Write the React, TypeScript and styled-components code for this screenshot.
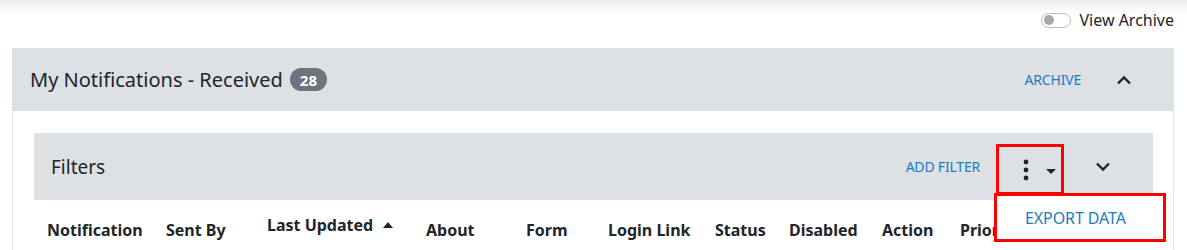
import React from "react";
import styled, { createGlobalStyle } from "styled-components";

const GlobalStyle = createGlobalStyle`
  body {
    margin: 0;
    font-family: "Noto Sans", "Open Sans", sans-serif;
    color: #212529;
    background: #fff;
  }
`;

const columns = [
  { label: "Notification", width: 119 },
  { label: "Sent By", width: 101 },
  { label: "Last Updated", width: 159, sorted: true },
  { label: "About", width: 100 },
  { label: "Form", width: 82 },
  { label: "Login Link", width: 107 },
  { label: "Status", width: 74 },
  { label: "Disabled", width: 93 },
  { label: "Action", width: 78 },
  { label: "Priority", width: 100 },
];

const App = () => {
  return (
    <>
      <GlobalStyle />
      <Page>
        <ToggleRow>
          <Switch />
          <span>View Archive</span>
        </ToggleRow>
        <Panel>
          <PanelHeader>
            <Title>
              My Notifications - Received <Badge>28</Badge>
            </Title>
            <LinkButton>ARCHIVE</LinkButton>
            <ChevronButton $gap={35}>
              <svg width="16" height="10" viewBox="0 0 16 10">
                <path d="M2 8.5 L8 2.5 L14 8.5" fill="none" stroke="#212529" strokeWidth="2.4" />
              </svg>
            </ChevronButton>
          </PanelHeader>
          <PanelBody>
            <FiltersBar>
              <FiltersTitle>Filters</FiltersTitle>
              <LinkButton>ADD FILTER</LinkButton>
              <MenuWrap>
                <KebabButton>
                  <svg width="8" height="22" viewBox="0 0 8 22">
                    <circle cx="4" cy="3" r="2.4" fill="#212529" />
                    <circle cx="4" cy="11" r="2.4" fill="#212529" />
                    <circle cx="4" cy="19" r="2.4" fill="#212529" />
                  </svg>
                  <Caret />
                </KebabButton>
                <Menu>
                  <MenuItem>EXPORT DATA</MenuItem>
                </Menu>
              </MenuWrap>
              <ChevronButton $gap={31}>
                <svg width="16" height="10" viewBox="0 0 16 10">
                  <path d="M2 1.5 L8 7.5 L14 1.5" fill="none" stroke="#212529" strokeWidth="2.4" />
                </svg>
              </ChevronButton>
            </FiltersBar>
            <HeadRow>
              {columns.map((c) => (
                <HeadCell key={c.label} $width={c.width} $raised={!!c.sorted}>
                  {c.label}
                  {c.sorted && <SortUp />}
                </HeadCell>
              ))}
            </HeadRow>
          </PanelBody>
        </Panel>
      </Page>
    </>
  );
};

export default App;

const Page = styled.div`
  height: 250px;
  overflow: hidden;
  background: linear-gradient(#ebebeb 0, #fbfbfb 10px, #fff 18px);
`;

const ToggleRow = styled.div`
  display: flex;
  align-items: center;
  justify-content: flex-end;
  gap: 8px;
  height: 48px;
  padding: 2px 13px 10px 0;
  box-sizing: border-box;
  font-size: 16px;
  color: #212529;
`;

const Switch = styled.span`
  position: relative;
  width: 28px;
  height: 13px;
  border: 1px solid #b9bcc0;
  border-radius: 8px;
  background: #fff;

  &::after {
    content: "";
    position: absolute;
    left: 2px;
    top: 1.5px;
    width: 10px;
    height: 10px;
    border-radius: 50%;
    background: #a6a8ad;
  }
`;

const Panel = styled.div`
  margin: 0 13px 0 12px;
`;

const PanelHeader = styled.div`
  display: flex;
  align-items: center;
  height: 63px;
  padding: 0 42px 0 18px;
  background: #dee1e4;
`;

const Title = styled.h2`
  flex: 1;
  margin: 0;
  display: flex;
  align-items: center;
  gap: 7px;
  font-size: 20px;
  font-weight: 400;
  color: #212529;
`;

const Badge = styled.span`
  display: inline-flex;
  align-items: center;
  justify-content: center;
  height: 23px;
  padding: 0 10px;
  border-radius: 12px;
  background: #6c757d;
  color: #fff;
  font-size: 15px;
  font-weight: 700;
`;

const LinkButton = styled.span`
  color: #1b7bc4;
  font-size: 14px;
  letter-spacing: -0.2px;
`;

const ChevronButton = styled.span<{ $gap: number }>`
  display: flex;
  align-items: center;
  margin-left: ${(p) => p.$gap}px;
`;

const PanelBody = styled.div`
  border-left: 1px solid #e2e4e6;
  border-right: 1px solid #e2e4e6;
  padding: 22px 20px 0 21px;
`;

const FiltersBar = styled.div`
  display: flex;
  align-items: center;
  height: 67px;
  padding: 0 42px 0 17px;
  background: #dee1e4;
`;

const FiltersTitle = styled.div`
  flex: 1;
  font-size: 19px;
  color: #212529;
`;

const MenuWrap = styled.div`
  position: relative;
  margin-left: 16px;
  margin-top: 6px;
`;

const KebabButton = styled.div`
  display: flex;
  align-items: center;
  gap: 16px;
  width: 68px;
  height: 51px;
  padding-left: 23px;
  box-sizing: border-box;
  border: 3px solid #ff0000;
`;

const Caret = styled.span`
  width: 0;
  height: 0;
  margin-top: 4px;
  border-left: 5px solid transparent;
  border-right: 5px solid transparent;
  border-top: 5px solid #212529;
`;

const Menu = styled.div`
  position: absolute;
  top: 49px;
  left: -2px;
  width: 172px;
  height: 49px;
  box-sizing: border-box;
  border: 3px solid #ff0000;
  background: #fff;
  display: flex;
  align-items: center;
  z-index: 2;
`;

const MenuItem = styled.div`
  padding-left: 28px;
  color: #1b7bc4;
  font-size: 16px;
  letter-spacing: -0.1px;
`;

const HeadRow = styled.div`
  display: flex;
  align-items: center;
  height: 60px;
  padding-left: 13px;
`;

const HeadCell = styled.div<{ $width: number; $raised: boolean }>`
  flex: 0 0 ${(p) => p.$width}px;
  display: flex;
  align-items: center;
  gap: 10px;
  font-size: 16px;
  font-weight: 700;
  color: #212529;
  white-space: nowrap;
  margin-bottom: ${(p) => (p.$raised ? 10 : 0)}px;
`;

const SortUp = styled.span`
  width: 0;
  height: 0;
  border-left: 5px solid transparent;
  border-right: 5px solid transparent;
  border-bottom: 6px solid #212529;
`;
